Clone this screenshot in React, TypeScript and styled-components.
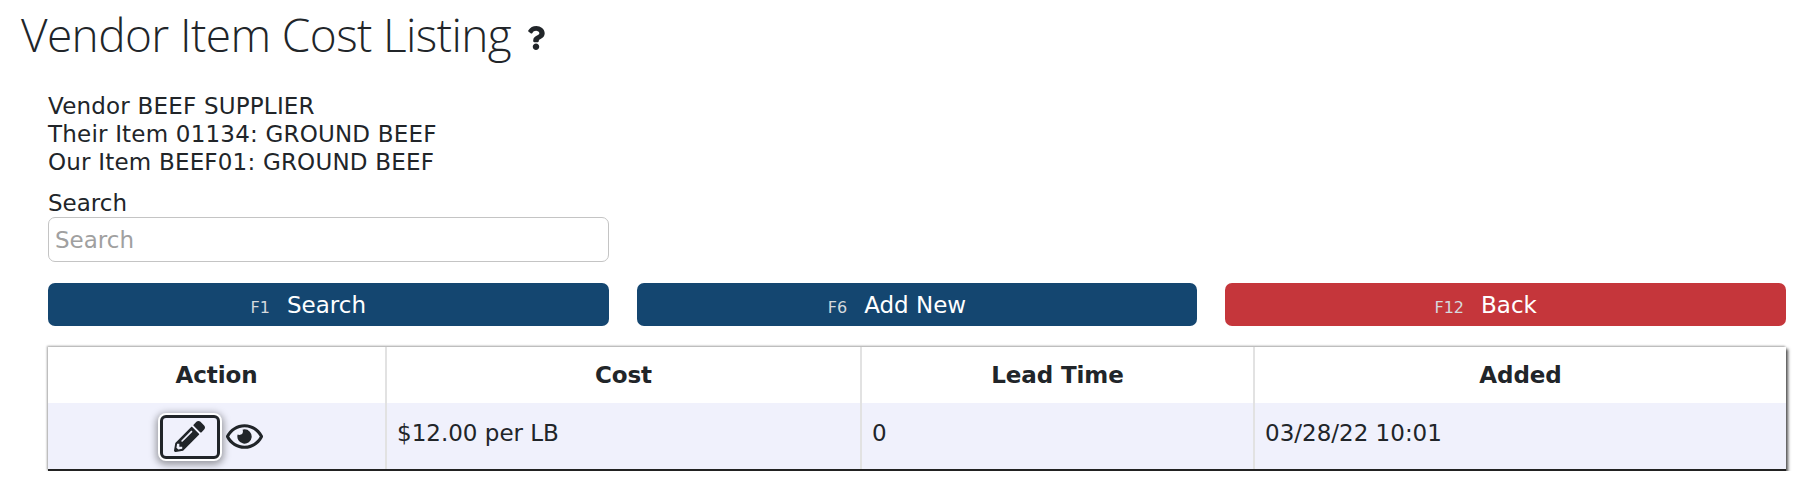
import React from "react";
import styled, { createGlobalStyle } from "styled-components";
import { FaPencilAlt, FaQuestion, FaRegEye } from "react-icons/fa";

const GlobalStyle = createGlobalStyle`
  * {
    box-sizing: border-box;
  }

  body {
    margin: 0;
    background: #fff;
    color: #212529;
    font-family: "DejaVu Sans", Verdana, sans-serif;
    font-size: 23px;
    line-height: 28px;
  }
`;

export default function App(): JSX.Element {
  return (
    <Page>
      <GlobalStyle />
      <Title>
        Vendor Item Cost Listing
        <HelpIcon>
          <FaQuestion />
        </HelpIcon>
      </Title>
      <Content>
        <Details>
          <div>Vendor BEEF SUPPLIER</div>
          <div>Their Item 01134: GROUND BEEF</div>
          <div>Our Item BEEF01: GROUND BEEF</div>
        </Details>
        <Field>
          <label htmlFor="search">Search</label>
          <SearchInput id="search" placeholder="Search" />
        </Field>
        <ButtonRow>
          <ActionButton $color="#144670">
            <KeyHint>F1</KeyHint>Search
          </ActionButton>
          <ActionButton $color="#144670">
            <KeyHint>F6</KeyHint>Add New
          </ActionButton>
          <ActionButton $color="#c5363b">
            <KeyHint>F12</KeyHint>Back
          </ActionButton>
        </ButtonRow>
        <TableFrame>
          <CostTable>
            <colgroup>
              <col width="338" />
              <col width="475" />
              <col width="393" />
              <col />
            </colgroup>
            <thead>
              <tr>
                <th>Action</th>
                <th>Cost</th>
                <th>Lead Time</th>
                <th>Added</th>
              </tr>
            </thead>
            <tbody>
              <tr>
                <ActionCell>
                  <EditButton>
                    <FaPencilAlt />
                  </EditButton>
                  <ViewIcon />
                </ActionCell>
                <td>$12.00 per LB</td>
                <td>0</td>
                <td>03/28/22 10:01</td>
              </tr>
            </tbody>
          </CostTable>
        </TableFrame>
      </Content>
    </Page>
  );
}

const Page = styled.div`
  padding: 6px 27px 0 21px;
`;

const Title = styled.h1`
  margin: 0;
  font-family: "Open Sans", sans-serif;
  font-size: 46px;
  font-weight: 300;
  line-height: 56px;
  letter-spacing: -0.6px;
  display: flex;
  align-items: center;
`;

const HelpIcon = styled.span`
  display: inline-flex;
  margin: 8px 0 0 13px;
  font-size: 24px;
  color: #212529;
`;

const Content = styled.div`
  padding: 30px 0 0 27px;
`;

const Details = styled.div`
  margin-bottom: 13px;
  letter-spacing: 0.2px;
`;

const Field = styled.div`
  width: 561px;
  display: flex;
  flex-direction: column;
`;

const SearchInput = styled.input`
  height: 45px;
  width: 100%;
  padding: 0 6px;
  border: 1px solid #c4c4c4;
  border-radius: 7px;
  font: inherit;
  color: #212529;
  outline: none;

  &::placeholder {
    color: #a0a0a0;
    opacity: 1;
  }
`;

const ButtonRow = styled.div`
  display: grid;
  grid-template-columns: repeat(3, 1fr);
  column-gap: 28px;
  margin-top: 21px;
`;

const ActionButton = styled.button<{ $color: string }>`
  height: 43px;
  padding: 3px 40px 0 0;
  border: none;
  border-radius: 7px;
  background: ${(props) => props.$color};
  color: #fff;
  font: inherit;
`;

const KeyHint = styled.span`
  margin-right: 17px;
  font-size: 16px;
  color: #d5d9dd;
`;

const TableFrame = styled.div`
  margin-top: 21px;
  border-bottom: 2px solid #222;
  box-shadow: 2px 2px 3px rgba(0, 0, 0, 0.7), -1px -1px 2px #aaa;
`;

const CostTable = styled.table`
  width: 100%;
  border-collapse: collapse;
  table-layout: fixed;

  th {
    height: 56px;
    padding: 0 10px;
    background: #fff;
    font-weight: 700;
    letter-spacing: -0.1px;
    text-align: center;
    border-right: 2px solid #e2e2e2;
  }

  td {
    height: 66px;
    padding: 0 10px 6px;
    background: #f0f1fc;
    border-right: 2px solid #e2e2e2;
  }

  th:last-child,
  td:last-child {
    border-right: none;
  }
`;

const ActionCell = styled.td`
  && {
    padding: 1px 11px 0 0;
  }
  text-align: center;
  font-size: 0;
`;

const EditButton = styled.button`
  display: inline-flex;
  align-items: center;
  justify-content: center;
  width: 60px;
  height: 44px;
  padding: 0;
  border: 3px solid #212529;
  border-radius: 6px;
  background: #f0f1fc;
  color: #212529;
  font-size: 31px;
  vertical-align: middle;
  box-shadow: 0 0 0 2px #fff, 0 2px 7px 4px rgba(0, 0, 0, 0.35);
`;

const ViewIcon = styled(FaRegEye)`
  margin-left: 6px;
  font-size: 37px;
  color: #212529;
  vertical-align: middle;
`;
